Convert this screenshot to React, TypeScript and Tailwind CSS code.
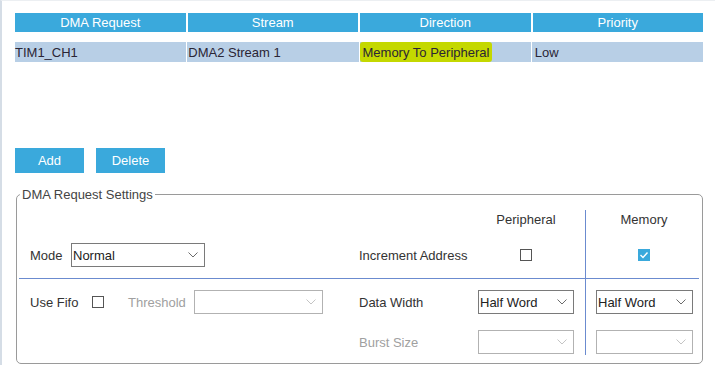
import React from 'react';

const font = "font-['Liberation_Sans',Arial,sans-serif]";

function Chevron({ disabled }: { disabled?: boolean }) {
  return (
    <svg width="10" height="6" viewBox="0 0 10 6" className="shrink-0">
      <polyline
        points="0.5,0.5 5,5 9.5,0.5"
        fill="none"
        stroke={disabled ? '#c4c4c4' : '#6b6b6b'}
        strokeWidth="1"
      />
    </svg>
  );
}

function Select({ value, className, disabled }: { value?: string; className: string; disabled?: boolean }) {
  return (
    <div
      className={`${className} flex h-[24px] items-center justify-between border pl-[1px] pr-[6px] text-[#222] ${
        disabled ? 'border-[#b2b2b2]' : 'border-[#7a7a7a]'
      }`}
    >
      <span>{value ?? ''}</span>
      <Chevron disabled={disabled} />
    </div>
  );
}

function Checkbox({ checked }: { checked?: boolean }) {
  if (checked) {
    return (
      <div className="flex h-[12px] w-[12px] items-center justify-center bg-[#3aa9dc]">
        <svg width="12" height="12" viewBox="0 0 12 12">
          <polyline points="2.5,6 5,8.5 9.5,3.5" fill="none" stroke="#fff" strokeWidth="1.4" />
        </svg>
      </div>
    );
  }
  return <div className="h-[12px] w-[12px] border border-[#555]" />;
}

const headers = ['DMA Request', 'Stream', 'Direction', 'Priority'];

export default function App() {
  return (
    <div
      className={`${font} h-[365px] w-[715px] overflow-hidden border-l-2 border-t border-l-[#d5dde6] border-t-[#eceff2] bg-white pl-[13px] pt-[12px] text-[13px] leading-[15px]`}
    >
      {/* DMA table */}
      <div className="grid w-[688px] grid-cols-4 gap-[2px]">
        {headers.map((h) => (
          <div key={h} className="flex h-[19px] items-center justify-center bg-[#3aa9dc] text-white">
            {h}
          </div>
        ))}
      </div>
      <div className="mt-[10px] grid w-[688px] grid-cols-4 gap-px text-[#2a2535]">
        <div className="flex h-[20px] items-center bg-[#b8cfe6]">TIM1_CH1</div>
        <div className="flex h-[20px] items-center bg-[#b8cfe6] pl-[1px]">DMA2 Stream 1</div>
        <div className="flex h-[20px] items-center bg-[#b8cfe6]">
          <span className="flex h-[20px] items-center rounded-[3px] bg-[#c4d800] px-[3px]">Memory To Peripheral</span>
        </div>
        <div className="flex h-[20px] items-center bg-[#b8cfe6] pl-[3px]">Low</div>
      </div>

      {/* Buttons */}
      <div className="mt-[86px] flex gap-[12px]">
        <button className="h-[25px] w-[69px] bg-[#3aa9dc] text-white">Add</button>
        <button className="h-[25px] w-[69px] bg-[#3aa9dc] text-white">Delete</button>
      </div>

      {/* Settings */}
      <fieldset className="ml-px mt-[14px] w-[687px] rounded-[5px] border border-[#9a9a9a] pb-[8px] pl-[2px] pr-[3px]">
        <legend className="ml-[1px] px-[2px] text-[#444]">DMA Request Settings</legend>

        <div className="mt-[8px] flex text-[#333]">
          <div className="flex w-[340px] flex-col pl-[11px]">
            <div className="h-[19px]" />
            <div className="mt-[14px] flex h-[24px] items-center">
              <span className="w-[41px]">Mode</span>
              <Select value="Normal" className="w-[134px]" />
            </div>
          </div>
          <div className="flex w-[119px] flex-col">
            <div className="h-[19px]" />
            <div className="mt-[14px] flex h-[24px] items-center">Increment Address</div>
          </div>
          <div className="flex w-[107px] flex-col">
            <div className="flex h-[19px] w-[96px] items-center justify-center">Peripheral</div>
            <div className="mt-[14px] flex h-[24px] w-[96px] items-center justify-center">
              <Checkbox />
            </div>
          </div>
          <div className="flex w-[113px] flex-col border-l border-[#6b8bcf] pb-[11px] pl-[10px]">
            <div className="flex h-[19px] w-[96px] items-center justify-center">Memory</div>
            <div className="mt-[14px] flex h-[24px] w-[96px] items-center justify-center">
              <Checkbox checked />
            </div>
          </div>
        </div>

        <div className="flex border-t border-[#6b8bcf] text-[#333]">
          <div className="flex w-[340px] flex-col pl-[11px] pt-[11px]">
            <div className="flex h-[24px] items-center">
              <span className="w-[62px]">Use Fifo</span>
              <Checkbox />
              <span className="ml-[24px] w-[66px] text-[#a0a0a0]">Threshold</span>
              <Select className="w-[129px]" disabled />
            </div>
          </div>
          <div className="flex w-[119px] flex-col pt-[11px]">
            <div className="flex h-[24px] items-center">Data Width</div>
            <div className="mt-[16px] flex h-[24px] items-center text-[#a0a0a0]">Burst Size</div>
          </div>
          <div className="flex w-[107px] flex-col pt-[11px]">
            <Select value="Half Word" className="w-[96px]" />
            <div className="mt-[16px]">
              <Select className="w-[96px]" disabled />
            </div>
          </div>
          <div className="flex w-[113px] flex-col border-l border-[#6b8bcf] pb-px pl-[10px] pt-[11px]">
            <Select value="Half Word" className="w-[97px]" />
            <div className="mt-[16px]">
              <Select className="w-[97px]" disabled />
            </div>
          </div>
        </div>
      </fieldset>
    </div>
  );
}
